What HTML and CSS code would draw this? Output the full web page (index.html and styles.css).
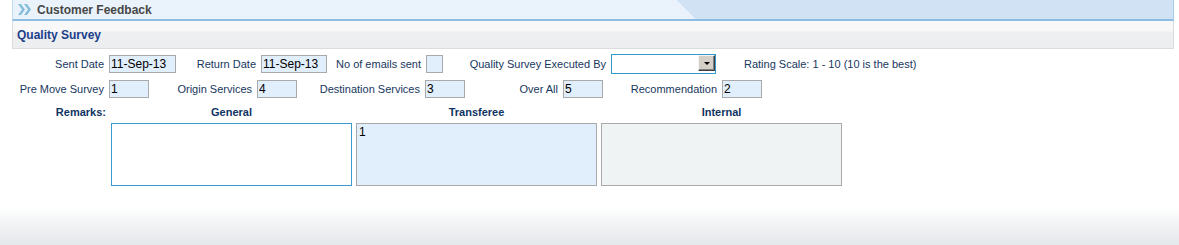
FILE: index.html
```html
<!DOCTYPE html>
<html lang="en">
<head>
    <meta charset="UTF-8">
    <title>Customer Feedback - Quality Survey</title>
    <link rel="stylesheet" href="styles.css">
</head>
<body>
    <div class="page">
        <div class="module-head">
            <svg class="module-icon" width="13" height="11" viewBox="0 0 13 11">
                <polygon points="0,0 3,0 7,5.5 3,11 0,11 4,5.5" fill="#86bddb"/>
                <polygon points="6,0 9,0 13,5.5 9,11 6,11 10,5.5" fill="#86bddb"/>
            </svg>
            <span>Customer Feedback</span>
        </div>
        <div class="panel-head">Quality Survey</div>

        <div class="survey-form">
            <div class="form-row">
                <label class="field-label w92">Sent Date</label>
                <input type="text" class="field w67" value="11-Sep-13" readonly>
                <label class="field-label w80">Return Date</label>
                <input type="text" class="field w66" value="11-Sep-13" readonly>
                <label class="field-label w94">No of emails sent</label>
                <input type="text" class="field w17" value="" readonly>
                <label class="field-label w163">Quality Survey Executed By</label>
                <div class="select-box">
                    <span class="select-btn"><span class="select-arrow"></span></span>
                </div>
                <span class="rating-note">Rating Scale: 1 - 10 (10 is the best)</span>
            </div>
            <div class="form-row">
                <label class="field-label w92">Pre Move Survey</label>
                <input type="text" class="field w40" value="1" readonly>
                <label class="field-label w103">Origin Services</label>
                <input type="text" class="field w40" value="4" readonly>
                <label class="field-label w123">Destination Services</label>
                <input type="text" class="field w40" value="3" readonly>
                <label class="field-label w93">Over All</label>
                <input type="text" class="field w40" value="5" readonly>
                <label class="field-label w114">Recommendation</label>
                <input type="text" class="field w40" value="2" readonly>
            </div>

            <div class="remarks">
                <div class="remarks-label">Remarks:</div>
                <div class="remarks-title">General</div>
                <div class="remarks-title">Transferee</div>
                <div class="remarks-title">Internal</div>
                <div></div>
                <textarea class="remark remark-general"></textarea>
                <textarea class="remark remark-transferee" readonly>1</textarea>
                <textarea class="remark remark-internal" readonly></textarea>
            </div>
        </div>
    </div>
    <div class="page-foot"></div>
</body>
</html>
```

FILE: styles.css
```css
/* Customer feedback - quality survey screen */
body {
    margin: 0;
    font-family: "Liberation Sans", Arial, sans-serif;
    font-size: 11px;
    color: #17375e;
    background-color: #fff;
}
.page {
    margin: 0 5px 0 12px;
}
.module-head {
    display: flex;
    align-items: center;
    gap: 6px;
    height: 19px;
    padding-left: 5px;
    border-left: 1px solid #c6dcef;
    border-right: 1px solid #a9c9e6;
    border-bottom: 2px solid #8dbde2;
    background: linear-gradient(46deg, #eaf3fc 50%, #d0e2f3 50%) 0 0 / 1346px 100% no-repeat, #d0e2f3;
    font-size: 12px;
    font-weight: bold;
    color: #474747;
}
.module-icon {
    flex: none;
}
.panel-head {
    display: flex;
    align-items: center;
    height: 27px;
    padding-left: 4px;
    border: 1px solid #dcdcdc;
    border-top: 0;
    background: linear-gradient(#f8f8f8 0, #f8f8f8 10px, #eeeff1 11px, #eceef0 100%);
    font-size: 12px;
    font-weight: bold;
    color: #1b3f8b;
}
.survey-form {
    padding-top: 5px;
}
.form-row {
    display: flex;
    align-items: center;
    height: 20px;
}
.form-row + .form-row {
    margin-top: 5px;
}
.field-label {
    flex: none;
    margin-right: 5px;
    text-align: right;
    white-space: nowrap;
}
.field {
    flex: none;
    box-sizing: border-box;
    height: 18px;
    margin: 0;
    padding: 0 1px;
    border: 1px solid #a9a9a9;
    background-color: #e1eefb;
    font-family: "Liberation Sans", Arial, sans-serif;
    font-size: 12px;
    color: #000;
    outline: none;
}
.w17 { width: 17px; }
.w40 { width: 40px; }
.w66 { width: 66px; }
.w67 { width: 67px; }
.w80 { width: 80px; }
.w92 { width: 92px; }
.w93 { width: 93px; }
.w94 { width: 94px; }
.w103 { width: 103px; }
.w114 { width: 114px; }
.w123 { width: 123px; }
.w163 { width: 163px; }
.select-box {
    flex: none;
    box-sizing: border-box;
    width: 105px;
    height: 20px;
    border: 1px solid #3399cc;
    background-color: #fff;
    display: flex;
    justify-content: flex-end;
    align-items: flex-start;
}
.select-btn {
    box-sizing: border-box;
    width: 17px;
    height: 16px;
    background-color: #d4d0c8;
    border: 1px solid;
    border-color: #f4f4f4 #404040 #404040 #f4f4f4;
    box-shadow: inset -1px -1px #808080;
    display: flex;
    align-items: center;
    justify-content: center;
}
.select-arrow {
    width: 0;
    height: 0;
    border-left: 3px solid transparent;
    border-right: 3px solid transparent;
    border-top: 3px solid #000;
    margin-top: 1px;
}
.rating-note {
    margin-left: 28px;
    white-space: nowrap;
}
.remarks {
    display: grid;
    grid-template-columns: 95px repeat(3, 241px);
    column-gap: 4px;
    row-gap: 3px;
    margin-top: 6px;
}
.remarks-label,
.remarks-title {
    line-height: 15px;
    font-weight: bold;
    color: #0f3462;
}
.remarks-label {
    text-align: right;
    padding-right: 1px;
}
.remarks-title {
    text-align: center;
}
.remark {
    display: block;
    box-sizing: border-box;
    width: 241px;
    height: 63px;
    margin: 0;
    padding: 1px 2px;
    border: 1px solid #a9a9a9;
    font-family: "Liberation Sans", Arial, sans-serif;
    font-size: 12px;
    color: #000;
    resize: none;
    overflow: hidden;
    outline: none;
}
.remark-general {
    border-color: #3a9ad0;
    background-color: #fff;
}
.remark-transferee {
    background-color: #e1eefb;
}
.remark-internal {
    background-color: #f0f3f4;
}
.page-foot {
    margin-top: 19px;
    height: 40px;
    background: linear-gradient(#fff 0, #fff 4px, #f4f6f7 15px, #e5e8eb 100%);
}
```
